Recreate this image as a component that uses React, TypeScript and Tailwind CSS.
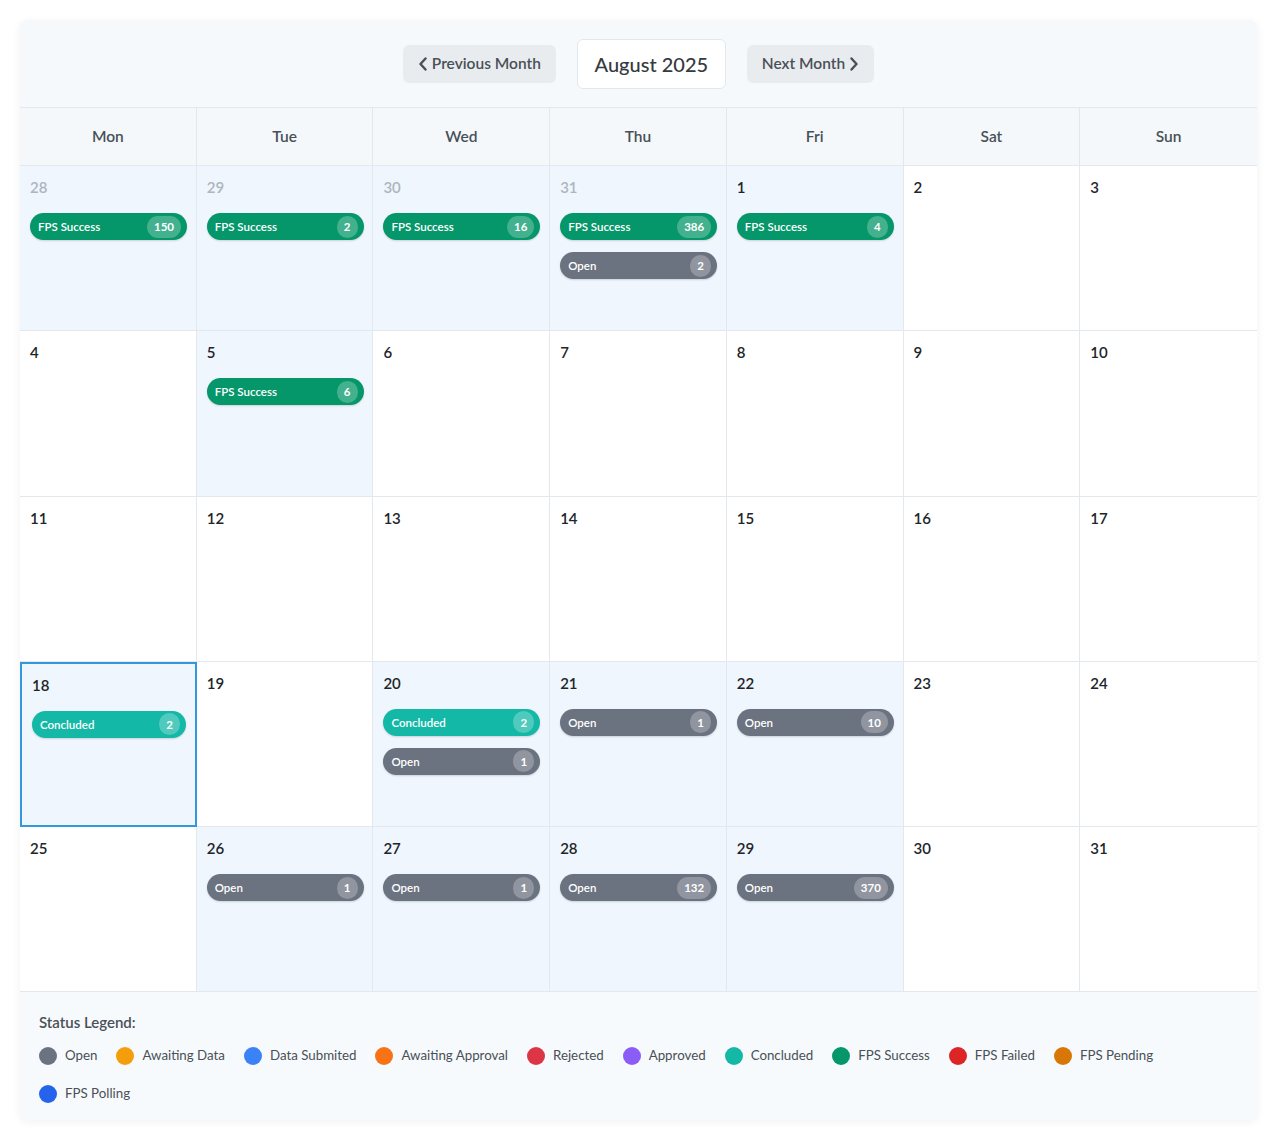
import React from "react";

type Status = "open" | "concluded" | "fps";

interface Pill {
  status: Status;
  count: number;
}

interface Day {
  n: number;
  muted?: boolean;
  selected?: boolean;
  pills?: Pill[];
}

const pillStyles: Record<Status, { label: string; cls: string }> = {
  open: { label: "Open", cls: "bg-[#6b7280]" },
  concluded: { label: "Concluded", cls: "bg-[#14b8a6]" },
  fps: { label: "FPS Success", cls: "bg-[#059669]" },
};

const weeks: Day[][] = [
  [
    { n: 28, muted: true, pills: [{ status: "fps", count: 150 }] },
    { n: 29, muted: true, pills: [{ status: "fps", count: 2 }] },
    { n: 30, muted: true, pills: [{ status: "fps", count: 16 }] },
    {
      n: 31,
      muted: true,
      pills: [
        { status: "fps", count: 386 },
        { status: "open", count: 2 },
      ],
    },
    { n: 1, pills: [{ status: "fps", count: 4 }] },
    { n: 2 },
    { n: 3 },
  ],
  [
    { n: 4 },
    { n: 5, pills: [{ status: "fps", count: 6 }] },
    { n: 6 },
    { n: 7 },
    { n: 8 },
    { n: 9 },
    { n: 10 },
  ],
  [
    { n: 11 },
    { n: 12 },
    { n: 13 },
    { n: 14 },
    { n: 15 },
    { n: 16 },
    { n: 17 },
  ],
  [
    { n: 18, selected: true, pills: [{ status: "concluded", count: 2 }] },
    { n: 19 },
    {
      n: 20,
      pills: [
        { status: "concluded", count: 2 },
        { status: "open", count: 1 },
      ],
    },
    { n: 21, pills: [{ status: "open", count: 1 }] },
    { n: 22, pills: [{ status: "open", count: 10 }] },
    { n: 23 },
    { n: 24 },
  ],
  [
    { n: 25 },
    { n: 26, pills: [{ status: "open", count: 1 }] },
    { n: 27, pills: [{ status: "open", count: 1 }] },
    { n: 28, pills: [{ status: "open", count: 132 }] },
    { n: 29, pills: [{ status: "open", count: 370 }] },
    { n: 30 },
    { n: 31 },
  ],
];

const legend = [
  { label: "Open", cls: "bg-[#6b7280]" },
  { label: "Awaiting Data", cls: "bg-[#f59e0b]" },
  { label: "Data Submited", cls: "bg-[#3b82f6]" },
  { label: "Awaiting Approval", cls: "bg-[#f97316]" },
  { label: "Rejected", cls: "bg-[#dc3545]" },
  { label: "Approved", cls: "bg-[#8b5cf6]" },
  { label: "Concluded", cls: "bg-[#14b8a6]" },
  { label: "FPS Success", cls: "bg-[#059669]" },
  { label: "FPS Failed", cls: "bg-[#dc2626]" },
  { label: "FPS Pending", cls: "bg-[#d97706]" },
  { label: "FPS Polling", cls: "bg-[#2563eb]" },
];

const dayNames = ["Mon", "Tue", "Wed", "Thu", "Fri", "Sat", "Sun"];

const ChevronLeft = () => (
  <svg width="10" height="14" viewBox="0 0 10 14" fill="none">
    <path d="M7.5 1.5L2.5 7l5 5.5" stroke="currentColor" strokeWidth="2.4" strokeLinecap="round" strokeLinejoin="round" />
  </svg>
);

const ChevronRight = () => (
  <svg width="10" height="14" viewBox="0 0 10 14" fill="none">
    <path d="M2.5 1.5L7.5 7l-5 5.5" stroke="currentColor" strokeWidth="2.4" strokeLinecap="round" strokeLinejoin="round" />
  </svg>
);

const StatusPill: React.FC<{ pill: Pill; narrow?: boolean }> = ({ pill, narrow }) => {
  const s = pillStyles[pill.status];
  return (
    <div
      className={`flex items-center justify-between h-[27px] ${
        narrow ? "w-[154px]" : "w-[157px]"
      } rounded-full pl-[8px] pr-[6px] text-white shadow-[0_1px_2px_rgba(0,0,0,0.15)] ${s.cls}`}
    >
      <span className="text-[11.5px] font-semibold">{s.label}</span>
      <span className="flex items-center justify-center h-[22px] min-w-[21px] px-[7px] rounded-full bg-white/25 text-[11.5px] font-bold">
        {pill.count}
      </span>
    </div>
  );
};

const DayCell: React.FC<{ day: Day; last: boolean }> = ({ day, last }) => {
  const hasEvents = !!day.pills?.length;
  const bg = hasEvents || day.selected ? "bg-[#eff6fd]" : "bg-white";
  const border = day.selected
    ? "border-2 border-[#3497db] px-[10px] pt-[10px]"
    : `border-b border-[#e3e8ee] ${last ? "" : "border-r"} px-[10px] pt-[10px]`;
  return (
    <div className={`h-[165.3px] ${bg} ${border}`}>
      <div
        className={`text-[15px] leading-[22px] font-semibold ${
          day.muted ? "text-[#adb5bd]" : "text-[#212529]"
        }`}
      >
        {day.n}
      </div>
      {hasEvents && (
        <div className="mt-[15px] flex flex-col gap-[12px]">
          {day.pills!.map((p, i) => (
            <StatusPill key={i} pill={p} narrow={day.selected} />
          ))}
        </div>
      )}
    </div>
  );
};

export default function App() {
  return (
    <div
      className="min-h-screen bg-white pt-[20px] pl-[20px]"
      style={{ fontFamily: "Lato, 'Open Sans', sans-serif" }}
    >
      <div className="w-[1237px] rounded-lg bg-[#f6f9fc] shadow-[0_2px_10px_rgba(0,0,0,0.06)] overflow-hidden">
        {/* month nav */}
        <div className="h-[88px] flex items-center justify-center gap-[21px] border-b border-[#e3e8ee]">
          <button className="flex items-center gap-[4px] h-[38px] px-[15px] rounded-md bg-[#e9ecef] text-[#495057] text-[15.5px] font-semibold">
            <ChevronLeft />
            <span>Previous Month</span>
          </button>
          <div className="h-[50px] w-[149px] flex items-center justify-center rounded-md bg-white border border-[#e3e8ee] text-[#343a40] text-[20px] font-medium">
            August 2025
          </div>
          <button className="flex items-center gap-[4px] h-[38px] px-[15px] rounded-md bg-[#e9ecef] text-[#495057] text-[15.5px] font-semibold">
            <span>Next Month</span>
            <ChevronRight />
          </button>
        </div>

        {/* weekday header */}
        <div className="grid grid-cols-7 bg-[#f4f8fb]">
          {dayNames.map((d, i) => (
            <div
              key={d}
              className={`h-[58px] flex items-center justify-center border-b border-[#e3e8ee] ${
                i < 6 ? "border-r" : ""
              } text-[15.5px] font-semibold text-[#495057]`}
            >
              {d}
            </div>
          ))}
        </div>

        {/* days */}
        <div className="grid grid-cols-7">
          {weeks.flat().map((day, i) => (
            <DayCell key={i} day={day} last={i % 7 === 6} />
          ))}
        </div>

        {/* legend */}
        <div className="px-[19px] pt-[19px] pb-[16px] bg-[#f7fafc]">
          <div className="text-[15px] font-semibold text-[#495057]">Status Legend:</div>
          <div className="mt-[12px] flex flex-wrap gap-x-[19px] gap-y-[18px]">
            {legend.map((l) => (
              <div key={l.label} className="flex items-center gap-[8px] h-[20px]">
                <span className={`inline-block w-[18px] h-[18px] rounded-full ${l.cls}`} />
                <span className="text-[13.3px] text-[#495057]">{l.label}</span>
              </div>
            ))}
          </div>
        </div>
      </div>
    </div>
  );
}
